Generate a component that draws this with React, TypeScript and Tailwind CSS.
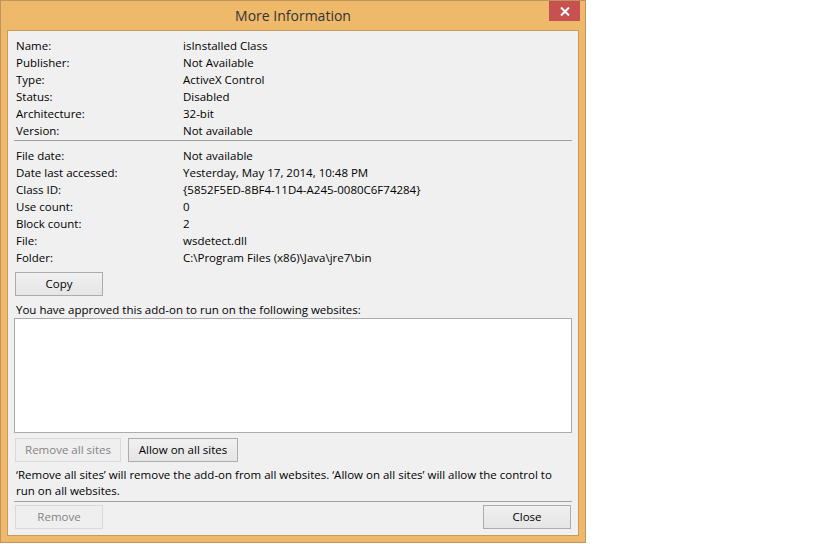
import React from 'react';

const generalRows: [string, string][] = [
  ['Name:', 'isInstalled Class'],
  ['Publisher:', 'Not Available'],
  ['Type:', 'ActiveX Control'],
  ['Status:', 'Disabled'],
  ['Architecture:', '32-bit'],
  ['Version:', 'Not available'],
];

const fileRows: [string, string][] = [
  ['File date:', 'Not available'],
  ['Date last accessed:', 'Yesterday, May 17, 2014, 10:48 PM'],
  ['Class ID:', '{5852F5ED-8BF4-11D4-A245-0080C6F74284}'],
  ['Use count:', '0'],
  ['Block count:', '2'],
  ['File:', 'wsdetect.dll'],
  ['Folder:', 'C:\\Program Files (x86)\\Java\\jre7\\bin'],
];

const InfoRows: React.FC<{ rows: [string, string][] }> = ({ rows }) => (
  <div className="ml-[8px] flex flex-col">
    {rows.map(([label, value]) => (
      <div key={label} className="flex h-[17px] items-center">
        <span className="w-[167px]">{label}</span>
        <span>{value}</span>
      </div>
    ))}
  </div>
);

const Button: React.FC<{ label: string; width: string; disabled?: boolean }> = ({ label, width, disabled }) => (
  <button
    className={`${width} h-[24px] border flex items-center justify-center ${
      disabled
        ? 'border-[#d9d9d9] bg-[#efefef] text-[#838383]'
        : 'border-[#acacac] bg-gradient-to-b from-[#f0f0f0] to-[#e5e5e5] text-black'
    }`}
  >
    {label}
  </button>
);

export default function App() {
  return (
    <div className="w-[819px] h-[544px] bg-white" style={{ fontFamily: '"Open Sans", "Liberation Sans", sans-serif' }}>
      <div className="w-[586px] h-[543px] bg-[#eeb96b] border border-[#c0955c] flex flex-col">
        {/* Title bar */}
        <div className="relative h-[29px] flex items-center justify-center">
          <span className="text-[14px] text-[#333]">More Information</span>
          <div className="absolute top-0 right-[5px] w-[31px] h-[20px] bg-[#c75050] flex items-center justify-center">
            <svg width="10" height="9" viewBox="0 0 10 9">
              <path d="M1 0.5 L9 8.5 M9 0.5 L1 8.5" stroke="white" strokeWidth="2" />
            </svg>
          </div>
        </div>

        {/* Client area */}
        <div className="mx-[6px] mb-[6px] flex-1 bg-[#f0f0f0] border border-[#c99a5b] text-[11.5px] text-black flex flex-col">
          <div className="mt-[6px]">
            <InfoRows rows={generalRows} />
          </div>
          <div className="mt-[1px] ml-[6px] w-[558px] h-px bg-[#a0a0a0]" />
          <div className="mt-[6px]">
            <InfoRows rows={fileRows} />
          </div>

          <div className="mt-[6px] ml-[7px]">
            <Button label="Copy" width="w-[88px]" />
          </div>

          <div className="mt-[6px] ml-[8px] h-[16px] flex items-center">
            You have approved this add-on to run on the following websites:
          </div>
          <div className="ml-[6px] w-[558px] h-[115px] bg-white border border-[#acacac]" />

          <div className="mt-[5px] ml-[7px] flex gap-[7px]">
            <Button label="Remove all sites" width="w-[106px]" disabled />
            <Button label="Allow on all sites" width="w-[110px]" />
          </div>

          <div className="mt-[5px] ml-[8px] w-[545px] leading-[16px]">
            ‘Remove all sites’ will remove the add-on from all websites. ‘Allow on all sites’ will allow the control to run on all websites.
          </div>

          <div className="mt-[2px] ml-[6px] w-[558px] h-px bg-[#a0a0a0]" />

          <div className="mt-[3px] ml-[7px] mr-[7px] flex justify-between">
            <Button label="Remove" width="w-[88px]" disabled />
            <Button label="Close" width="w-[88px]" />
          </div>
        </div>
      </div>
    </div>
  );
}
